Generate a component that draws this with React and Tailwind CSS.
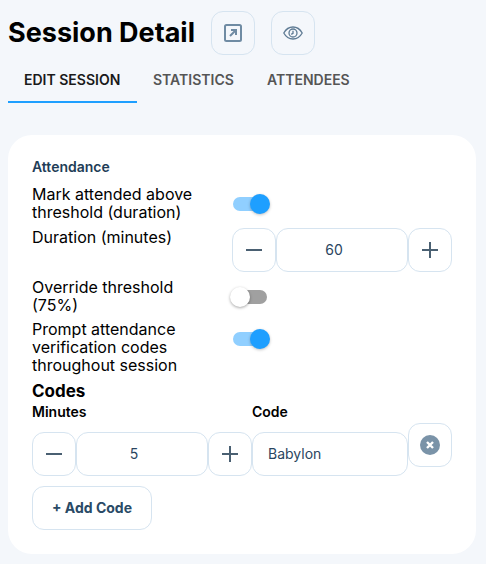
import { useState } from "react";

const boxBorder = "border border-[#d6e4f0] rounded-xl";

const Toggle = ({ on, onChange }) => {
  return (
    <button
      onClick={onChange}
      className={`relative w-[38px] h-[20px] mt-[9px] ${on ? "ml-[1px]" : "-ml-[2px]"}`}
    >
      {on ? (
        <>
          <span className="absolute left-0 top-[3px] w-[34px] h-[14px] rounded-full bg-[#90cfff]" />
          <span className="absolute left-[17px] top-0 w-[20px] h-[20px] rounded-full bg-[#1e9fff] shadow-[0_1px_3px_rgba(0,0,0,0.25)]" />
        </>
      ) : (
        <>
          <span className="absolute left-[3px] top-[3px] w-[34px] h-[14px] rounded-full bg-[#a0a0a0]" />
          <span className="absolute left-0 top-0 w-[20px] h-[20px] rounded-full bg-white shadow-[0_1px_3px_rgba(0,0,0,0.35)]" />
        </>
      )}
    </button>
  );
};

const StepButton = ({ type }) => {
  return (
    <button className={`w-[44px] h-[44px] flex items-center justify-center bg-white ${boxBorder}`}>
      <svg width="18" height="18" viewBox="0 0 18 18" fill="none" stroke="#4a6072" strokeWidth="2">
        <path d="M1 9h16" />
        {type === "plus" && <path d="M9 1v16" />}
      </svg>
    </button>
  );
};

const Stepper = ({ value }) => {
  return (
    <div className="flex w-[220px]">
      <StepButton type="minus" />
      <div className={`w-[132px] h-[44px] flex items-center justify-center pr-4 text-sm text-[#2a4560] bg-white ${boxBorder}`}>
        {value}
      </div>
      <StepButton type="plus" />
    </div>
  );
};

const Row = ({ label, children }) => {
  return (
    <div className="flex items-start">
      <div className="w-[200px] pr-6 text-base leading-[18px] text-black">{label}</div>
      {children}
    </div>
  );
};

const App = () => {
  const [markAttended, setMarkAttended] = useState(true);
  const [override, setOverride] = useState(false);
  const [prompt, setPrompt] = useState(true);

  return (
    <div
      className="w-[486px] h-[564px] overflow-hidden bg-[#f4f7fb] px-2 pt-[11px]"
      style={{ fontFamily: "Inter, sans-serif" }}
    >
      <div className="flex items-center h-[44px]">
        <h1 className="text-[27px] font-bold text-black w-[203px] mt-[1px]">Session Detail</h1>
        <button className={`w-[44px] h-[44px] flex items-center justify-center ${boxBorder}`}>
          <svg width="18" height="18" viewBox="0 0 18 18" fill="none" stroke="#6f8ba3" strokeWidth="2">
            <rect x="1" y="1" width="16" height="16" rx="1.5" />
            <path d="M6 12l5.5-5.5M7 6h5v5" />
          </svg>
        </button>
        <button className={`w-[44px] h-[44px] ml-4 flex items-center justify-center ${boxBorder}`}>
          <svg width="20" height="14" viewBox="0 0 20 14" fill="none" stroke="#5f7b94" strokeWidth="1.3">
            <path d="M0.8 7C3 3 6 1 10 1s7 2 9.2 6C17 11 14 13 10 13S3 11 0.8 7z" />
            <circle cx="10" cy="7" r="4" />
            <path d="M10 4.8V7.3L8.2 8.4" />
          </svg>
        </button>
      </div>

      <div className="flex mt-[12px] text-sm font-semibold">
        <div className="w-[129px] pl-4 pt-[3px] h-[36px] border-b-2 border-[#1e9fff] text-[#1a1a1a]">EDIT SESSION</div>
        <div className="w-[114px] pl-4 pt-[3px] text-[#555555]">STATISTICS</div>
        <div className="pl-4 pt-[3px] text-[#555555]">ATTENDEES</div>
      </div>

      <div className="mt-[32px] h-[419px] w-[468px] bg-white rounded-3xl px-6 pt-[23px]">
        <h2 className="text-sm leading-[18px] font-semibold text-[#1f3d57]">Attendance</h2>
        <div className="mt-[9px] flex flex-col gap-[6px]">
          <div className="mb-px">
            <Row label="Mark attended above threshold (duration)">
              <Toggle on={markAttended} onChange={() => setMarkAttended(!markAttended)} />
            </Row>
          </div>
          <Row label="Duration (minutes)">
            <Stepper value="60" />
          </Row>
          <Row label="Override threshold (75%)">
            <Toggle on={override} onChange={() => setOverride(!override)} />
          </Row>
          <Row label="Prompt attendance verification codes throughout session">
            <Toggle on={prompt} onChange={() => setPrompt(!prompt)} />
          </Row>
        </div>

        <h3 className="mt-[6px] text-[17px] leading-[22px] font-bold text-black">Codes</h3>
        <div className="flex text-sm leading-[18px] font-semibold text-black mt-[1px]">
          <div className="w-[220px]">Minutes</div>
          <div>Code</div>
        </div>
        <div className="flex items-start mt-[11px]">
          <Stepper value="5" />
          <div className={`w-[156px] h-[44px] flex items-center px-[15px] text-sm text-[#2a4560] ${boxBorder}`}>
            Babylon
          </div>
          <button className={`w-[44px] h-[44px] -mt-[9px] flex items-center justify-center ${boxBorder}`}>
            <svg width="20" height="20" viewBox="0 0 20 20">
              <circle cx="10" cy="10" r="10" fill="#7a93a8" />
              <path d="M7 7l6 6M13 7l-6 6" stroke="#ffffff" strokeWidth="2.4" />
            </svg>
          </button>
        </div>
        <button className={`mt-[10px] w-[120px] h-[44px] text-sm font-bold text-[#2a4a66] ${boxBorder}`}>
          + Add Code
        </button>
      </div>
    </div>
  );
};

export default App;
